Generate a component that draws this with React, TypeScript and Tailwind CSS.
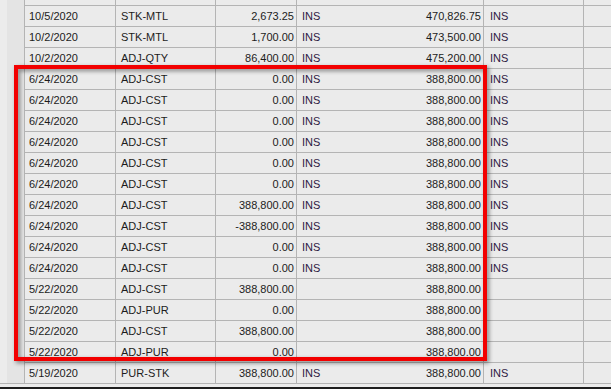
import React from 'react';

type Row = [string, string, string, string, string, string];

const rows: Row[] = [
  ['10/5/2020', 'STK-MTL', '2,673.25', 'INS', '470,826.75', 'INS'],
  ['10/2/2020', 'STK-MTL', '1,700.00', 'INS', '473,500.00', 'INS'],
  ['10/2/2020', 'ADJ-QTY', '86,400.00', 'INS', '475,200.00', 'INS'],
  ['6/24/2020', 'ADJ-CST', '0.00', 'INS', '388,800.00', 'INS'],
  ['6/24/2020', 'ADJ-CST', '0.00', 'INS', '388,800.00', 'INS'],
  ['6/24/2020', 'ADJ-CST', '0.00', 'INS', '388,800.00', 'INS'],
  ['6/24/2020', 'ADJ-CST', '0.00', 'INS', '388,800.00', 'INS'],
  ['6/24/2020', 'ADJ-CST', '0.00', 'INS', '388,800.00', 'INS'],
  ['6/24/2020', 'ADJ-CST', '0.00', 'INS', '388,800.00', 'INS'],
  ['6/24/2020', 'ADJ-CST', '388,800.00', 'INS', '388,800.00', 'INS'],
  ['6/24/2020', 'ADJ-CST', '-388,800.00', 'INS', '388,800.00', 'INS'],
  ['6/24/2020', 'ADJ-CST', '0.00', 'INS', '388,800.00', 'INS'],
  ['6/24/2020', 'ADJ-CST', '0.00', 'INS', '388,800.00', 'INS'],
  ['5/22/2020', 'ADJ-CST', '388,800.00', '', '388,800.00', ''],
  ['5/22/2020', 'ADJ-PUR', '0.00', '', '388,800.00', ''],
  ['5/22/2020', 'ADJ-CST', '388,800.00', '', '388,800.00', ''],
  ['5/22/2020', 'ADJ-PUR', '0.00', '', '388,800.00', ''],
  ['5/19/2020', 'PUR-STK', '388,800.00', 'INS', '388,800.00', 'INS'],
];

const cell = 'border-r border-[#b4b4b4] h-full overflow-hidden whitespace-nowrap';
const cols = 'grid grid-cols-[91px_100px_81px_187px_100px_1fr]';

const App = () => {
  return (
    <div
      className="relative w-[611px] h-[389px] overflow-hidden bg-[#ebebeb] text-[11px] leading-[20px] text-[#1c1c1c]"
      style={{ fontFamily: '"Liberation Sans", Arial, sans-serif' }}
    >
      <div className="flex h-[384px]">
        {/* row selector strip */}
        <div className="w-[25px] h-full border-r border-b border-[#b4b4b4] bg-[#e4e4e4] flex">
          <div className="w-[7px] h-full bg-[#ececec]" />
        </div>

        <div className="flex-1 flex flex-col">
          <div className={`${cols} h-[6px] border-b border-[#b4b4b4]`}>
            <div className={cell} />
            <div className={cell} />
            <div className={cell} />
            <div className={cell} />
            <div className={cell} />
            <div />
          </div>
          {rows.map((r, idx) => (
            <div key={idx} className={`${cols} h-[21px] border-b border-[#b4b4b4]`}>
              <div className={`${cell} pl-[4px]`}>{r[0]}</div>
              <div className={`${cell} pl-[5px]`}>{r[1]}</div>
              <div className={`${cell} pr-[2px] text-right`}>{r[2]}</div>
              <div className={`${cell} pl-[5px] pr-[2px] flex justify-between`}>
                <span className="text-[#2e1a44]">{r[3]}</span>
                <span>{r[4]}</span>
              </div>
              <div className={`${cell} pl-[6px] text-[#2e1a44]`}>{r[5]}</div>
              <div />
            </div>
          ))}
        </div>
      </div>
      <div className="h-[3px] bg-[#ebebeb]" />
      <div className="h-[2px] bg-[#1e1e1e]" />

      {/* highlight box */}
      <div className="absolute left-[14px] top-[65px] w-[473px] h-[296px] border-4 border-[#f20000] drop-shadow-[2px_2px_2px_rgba(0,0,0,0.45)]" />
    </div>
  );
};

export default App;
